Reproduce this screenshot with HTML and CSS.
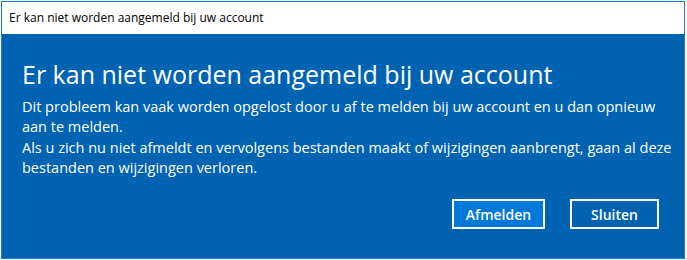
FILE: index.html
```html
<!DOCTYPE html>
<html lang="nl">
<head>
<meta charset="utf-8">
<link rel="stylesheet" href="styles.css">
</head>
<body>
<div class="window">
  <div class="titlebar">Er kan niet worden aangemeld bij uw account</div>
  <div class="content">
    <h1 class="heading">Er kan niet worden aangemeld bij uw account</h1>
    <p class="message">Dit probleem kan vaak worden opgelost door u af te melden bij uw account en u dan opnieuw aan te melden.<br>Als u zich nu niet afmeldt en vervolgens bestanden maakt of wijzigingen aanbrengt, gaan al deze bestanden en wijzigingen verloren.</p>
    <div class="actions">
      <button class="btn btn-primary">Afmelden</button>
      <button class="btn">Sluiten</button>
    </div>
  </div>
</div>
</body>
</html>
```
FILE: styles.css
```css
html, body {
  margin: 0;
  padding: 0;
  background: #ffffff;
}
body {
  padding: 1px 0 0 1px;
  font-family: "Open Sans", "Noto Sans", sans-serif;
}
.window {
  width: 684px;
  height: 258px;
  box-sizing: border-box;
  border: 1px solid #1a7ad0;
  display: flex;
  flex-direction: column;
  background: #0063b1;
}
.titlebar {
  height: 32px;
  flex: none;
  background: #ffffff;
  color: #000000;
  font-size: 12px;
  line-height: 32px;
  padding-left: 7px;
}
.content {
  flex: 1;
  padding: 23px 2px 0 20px;
  color: #ffffff;
  display: flex;
  flex-direction: column;
}
.heading {
  margin: 0;
  font-weight: 400;
  font-size: 25px;
  line-height: 34px;
}
.message {
  margin: 6px 0 0;
  font-size: 14.5px;
  line-height: 20.3px;
}
.actions {
  display: flex;
  justify-content: flex-end;
  gap: 25px;
  margin-top: 21px;
  padding-right: 23px;
}
.btn {
  font-family: inherit;
  font-size: 14px;
  font-weight: 600;
  color: #ffffff;
  background: transparent;
  border: 2px solid #ffffff;
  height: 30px;
  width: 89px;
  padding: 0;
}
.btn-primary {
  background: #0078d7;
  width: 93px;
}
```
